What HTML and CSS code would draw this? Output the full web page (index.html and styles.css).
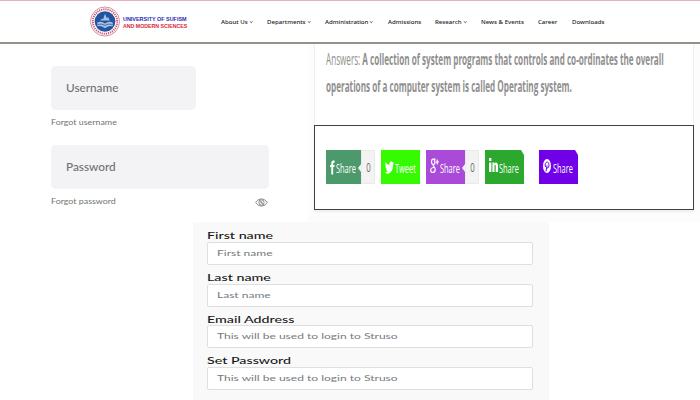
FILE: index.html
```
<!DOCTYPE html>
<html lang="en">
<head>
<meta charset="utf-8">
<title>University of Sufism and Modern Sciences</title>
<link rel="stylesheet" href="styles.css">
</head>
<body>
<header class="header">
  <div class="brand">
    <svg class="seal" viewBox="0 0 32 32">
      <circle cx="16" cy="16" r="15" fill="#fff" stroke="#d58b98" stroke-width="1"/>
      <circle cx="16" cy="16" r="12.6" fill="none" stroke="#c0526c" stroke-width="2" stroke-dasharray="1.2 1"/>
      <circle cx="16" cy="16" r="10.7" fill="#2454a0"/>
      <path d="M8 17q4-2 8 1 4-3 8-1v4q-4-1-8 2-4-3-8-2zM11 15l2-2 1 1 2-6 2 5 1-2 2 4z" fill="#a9c2e4"/>
      <path d="M8 19q5-1 8 1 3-2 8-1" fill="none" stroke="#3f6cad"/>
    </svg>
    <div class="brand-name"><span class="blue">UNIVERSITY OF SUFISM</span><span class="red">AND MODERN SCIENCES</span></div>
  </div>
  <nav class="nav">
    <a>About Us<i></i></a><a>Departments<i></i></a><a>Administration<i></i></a><a>Admissions</a><a>Research<i></i></a><a>News &amp; Events</a><a>Career</a><a>Downloads</a>
  </nav>
</header>
<main class="main">
  <section class="login">
    <div class="field field-short"><span>Username</span></div>
    <div class="hint"><span>Forgot username</span></div>
    <div class="field"><span>Password</span></div>
    <div class="hint"><span>Forgot password</span>
      <svg class="eye" viewBox="0 0 12 8"><path d="M.6 4Q3 .6 6 .6T11.4 4Q9 7.4 6 7.4T.6 4z" fill="none" stroke="#777" stroke-width=".8"/><circle cx="6" cy="4" r="2.4" fill="none" stroke="#777" stroke-width=".8"/><circle cx="6" cy="4" r=".9" fill="#777"/><path d="M3 1l6 6" stroke="#888" stroke-width=".6"/></svg>
    </div>
  </section>
  <section class="article">
    <div class="answer">
      <p class="line-one"><span class="light">Answers:</span> A collection of system programs that controls and co-ordinates the overall</p>
      <p class="line-two">operations of a computer system is called Operating system.</p>
    </div>
    <div class="share-box">
      <div class="share facebook">
        <svg class="icon" viewBox="0 0 6 17"><path d="M1.500 17V8H0V5.500h1.500V3.500Q1.500 0 4 0h1.500v2.800H4.600q-.8 0-.8 1.200v1.500h1.700L5.200 8H3.800v9z"/></svg>
        <span>Share</span><b><em>0</em></b>
      </div>
      <div class="share twitter">
        <svg class="icon" viewBox="0 0 24 24" preserveAspectRatio="none"><path d="M24 4.600a10 10 0 0 1-2.800.8A5 5 0 0 0 23.300 2.700a10 10 0 0 1-3.100 1.200A4.900 4.900 0 0 0 11.800 8.400 14 14 0 0 1 1.700 3.200 4.900 4.900 0 0 0 3.200 9.800a5 5 0 0 1-2.200-.6 4.900 4.900 0 0 0 3.900 4.900 5 5 0 0 1-2.200.1 4.900 4.900 0 0 0 4.600 3.400A10 10 0 0 1 0 19.500 14 14 0 0 0 21.500 7a10 10 0 0 0 2.500-2.400z"/></svg>
        <span>Tweet</span>
      </div>
      <div class="share google">
        <svg class="icon" viewBox="0 0 9 16"><path d="M5.500 1.200H3.200C1 1.200 1 6.500 3.200 6.500S5.400 2 3.500 1.200M3.300 6.500c-1.300 1.400 1.800 2 1.900 4.700.1 4-4.500 4-4.500 1.200C.7 9.800 3 9.500 4 9.500M7.200 1.500v5M5.800 4H9" fill="none" stroke="#fff" stroke-width="1.200"/></svg>
        <span>Share</span><b><em>0</em></b>
      </div>
      <div class="share linkedin">
        <svg class="icon" viewBox="0 0 9 14"><path d="M0 0h2.400v3H0zM0 4.500h2.400V14H0zM3.400 4.500h2v1.200c1-2 3.600-1.800 3.600 1.700V14H6.700V8c0-1.800-1.200-1.800-1.200.2V14H3.400z"/></svg>
        <span>Share</span>
      </div>
      <div class="share pinterest">
        <svg class="icon" viewBox="0 0 8 14"><ellipse cx="4" cy="7" rx="4" ry="7"/><path d="M3 12.500l1.100-6M2.500 8C1.500 5 2.800 3 4.200 3c2.400 0 2.200 6 .4 6q-.7 0-.9-1" fill="none" stroke="#7000e8" stroke-width="1"/></svg>
        <span>Share</span>
      </div>
    </div>
  </section>
</main>
<form class="signup">
  <label>First name</label><div class="input"><span>First name</span></div>
  <label>Last name</label><div class="input"><span>Last name</span></div>
  <label>Email Address</label><div class="input"><span>This will be used to login to Struso</span></div>
  <label>Set Password</label><div class="input"><span>This will be used to login to Struso</span></div>
</form>
</body>
</html>
```
FILE: styles.css
```
* { box-sizing: border-box; }
body { margin: 0; width: 700px; height: 400px; overflow: hidden; background: #fff; font-family: "Noto Sans", sans-serif; }
p { margin: 0; }
.header { height: 44px; display: flex; border-top: 1px solid #e2b2bd; border-bottom: 2px solid #92918a; }
.brand { width: 221px; padding: 5px 0 0 89px; display: flex; gap: 2px; }
.seal { width: 32px; height: 31px; flex: none; }
.brand-name { display: flex; flex-direction: column; padding-top: 10px; font: 700 5.700px/6.600px "Liberation Sans", sans-serif; white-space: nowrap; }
.brand-name span { transform-origin: left; transform: scaleX(.92); }
.brand-name .blue { color: #2929b5; transform: scaleX(.955); }
.red { color: #d72638; }
.nav { display: grid; grid-template-columns: 46px 58px 63px 47px 46px 57px 34px 40px; padding-top: 16px; font-size: 6.100px; line-height: 9px; font-weight: 500; color: #15231e; white-space: nowrap; }
.nav i { display: inline-block; width: 2.500px; height: 2.500px; margin: 0 0 1.500px 2px; border: solid #77807c; border-width: 0 1px 1px 0; transform: rotate(45deg) scale(.8); }
.main { display: flex; height: 178px; }
.login { width: 308px; padding: 22px 39px 0 50.500px; }
.field { height: 44px; border-radius: 5px; background: #f3f3f5; padding: 0 15px; display: flex; align-items: center; color: #707074; font: 500 10.500px/14px Lato, sans-serif; }
.field-short { width: 145px; }
.field span { transform-origin: left; transform: scaleX(1.12); }
.hint { height: 35px; padding-top: 7px; display: flex; justify-content: space-between; font: 8px/11px Lato, sans-serif; color: #707570; }
.hint span { transform-origin: left; transform: scaleX(1.11); }
.eye { width: 13px; height: 9px; margin: 2px 1px 0 0; }
.article { width: 392px; background: #fcfcfc; padding: 0 6px; }
.answer { height: 81px; padding: 2px 0 0 11px; background: #fff; border: solid #eee; border-width: 0 1px; font: 700 15.500px/27px "Open Sans", sans-serif; color: #908e8e; white-space: nowrap; }
.answer p { width: max-content; transform-origin: left; }
.line-one { transform: scaleX(.525); }
.line-two { transform: scaleX(.525); }
.light { font-weight: 400; }
.share-box { height: 85px; border: 1.500px solid #414141; background: #fff; padding: 24px 0 0 11px; display: flex; box-shadow: 0 2px 2px #eee; }
.share { height: 34px; display: flex; align-items: center; color: #fff; font: 400 13px/18px "Open Sans", sans-serif; }
.share span { width: 21px; padding-top: 1px; transform-origin: left; transform: scaleX(.57); }
.icon { fill: #fff; flex: none; }
.share b { position: relative; flex: none; width: 14px; height: 34px; background: #f3f3f3; border: 1px solid #eaeaea; color: #6b6b6b; font-weight: 400; font-size: 12px; line-height: 34px; text-align: center; }
.share em { display: inline-block; font-style: normal; transform: scaleX(.65); }
.share b::before { content: ""; position: absolute; left: -4px; top: 13px; border: solid transparent; border-width: 4px 3px 4px 0; border-right-color: #f3f3f3; }
.facebook { width: 49px; background: #4c996b; padding-left: 4px; margin-right: 6px; }
.facebook .icon { width: 5px; height: 17px; margin-right: 1px; }
.facebook span, .google span { flex: none; width: 25px; }
.twitter { width: 39px; background: #35fa00; padding-left: 4px; margin-right: 6px; }
.twitter .icon { width: 9px; height: 15px; margin-right: 1px; }
.google { width: 53px; background: #a94bd8; padding-left: 4px; margin-right: 6px; }
.google .icon { width: 9px; height: 16px; margin: 0 1px 2px 0; }
.linkedin, .pinterest { width: 39px; padding-left: 4px; clip-path: polygon(0 0, 36px 0, 100% 5px, 100% 100%, 0 100%); }
.linkedin { background: #2da82e; margin-right: 15px; }
.linkedin .icon { width: 9px; height: 14px; margin: 0 1px 5px 0; }
.pinterest { background: #7000e8; }
.pinterest .icon { width: 8px; height: 14px; margin: 0 2px 2px 0; }
.signup { width: 356px; height: 178px; margin-left: 193px; padding: 8px 16px 0 14px; background: #f9f9f9; font-family: Lato, sans-serif; }
.signup label { display: block; width: max-content; height: 11.750px; font-size: 8.800px; line-height: 12px; font-weight: 500; color: #171717; transform-origin: left; transform: scaleX(1.62); }
.input { height: 23px; margin-bottom: 7px; border: 1px solid #dedfe0; border-radius: 2px; background: #fff; padding: 0 9px; font-size: 8.300px; line-height: 21px; color: #757b80; }
.input span { display: block; width: max-content; transform-origin: left; transform: scaleX(1.45); }
```
